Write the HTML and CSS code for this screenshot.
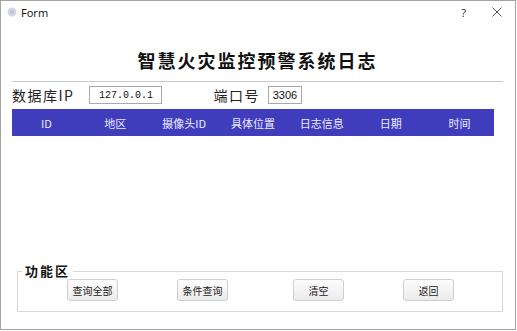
FILE: index.html
```html
<!DOCTYPE html>
<html lang="zh-CN">
<head>
    <meta charset="UTF-8">
    <title>Form</title>
    <link rel="stylesheet" href="styles.css">
</head>
<body>

<div class="window">
    <div class="titlebar">
        <svg class="app-icon" width="10" height="10" viewBox="0 0 10 10">
            <circle cx="5" cy="5" r="4.5" fill="#c9d9ec"/>
            <circle cx="5" cy="5" r="2.2" fill="#e3b7c4"/>
        </svg>
        <span class="caption">Form</span>
        <span class="help">?</span>
        <svg class="close" width="10" height="10" viewBox="0 0 10 10">
            <path d="M0.5 0.5 L9.5 9.5 M9.5 0.5 L0.5 9.5" stroke="#555" stroke-width="1"/>
        </svg>
    </div>

    <div class="content">
        <h1 class="title">智慧火灾监控预警系统日志</h1>
        <div class="rule"></div>

        <div class="conn-row">
            <label class="field-label" for="ip">数据库IP</label>
            <input class="ip-input" id="ip" type="text" value="127.0.0.1">
            <label class="field-label port-label" for="port">端口号</label>
            <input class="port-input" id="port" type="text" value="3306">
        </div>

        <div class="log-table">
            <div class="log-head">
                <span>ID</span>
                <span>地区</span>
                <span>摄像头ID</span>
                <span>具体位置</span>
                <span>日志信息</span>
                <span>日期</span>
                <span>时间</span>
            </div>
            <div class="log-body"></div>
        </div>

        <fieldset class="actions">
            <legend>功能区</legend>
            <div class="btn-row">
                <button>查询全部</button>
                <button>条件查询</button>
                <button class="btn-wide">清空</button>
                <button>返回</button>
            </div>
        </fieldset>
    </div>
</div>

</body>
</html>
```

FILE: styles.css
```css
body {
    margin: 0;
    padding: 0;
    background: #ffffff;
    font-family: "Noto Sans CJK SC", "Noto Sans", sans-serif;
}

.window {
    width: 516px;
    height: 330px;
    box-sizing: border-box;
    border: 1px solid #a3a3a3;
    background: #ffffff;
    display: flex;
    flex-direction: column;
}

.titlebar {
    height: 22px;
    display: flex;
    align-items: center;
    padding-left: 6px;
    font-family: "Noto Sans", sans-serif;
    font-size: 11px;
    color: #1a1a1a;
}

.app-icon {
    margin-right: 4px;
}

.caption {
    flex: 1;
}

.help {
    font-size: 11px;
    color: #333;
    margin-right: 26px;
}

.close {
    margin-right: 13px;
}

.content {
    flex: 1;
    display: flex;
    flex-direction: column;
    padding: 0 12px 0 11px;
}

.title {
    margin: 24px 0 0 0;
    text-align: center;
    font-size: 18px;
    line-height: 26px;
    font-weight: bold;
    letter-spacing: 2px;
    color: #111;
}

.rule {
    margin-top: 8px;
    height: 1px;
    background: #c8c8c8;
}

.conn-row {
    margin-top: 4px;
    height: 18px;
    display: flex;
    align-items: center;
}

.field-label {
    font-size: 14px;
    letter-spacing: 1.5px;
    color: #222;
    line-height: 18px;
}

.ip-input,
.port-input {
    height: 18px;
    box-sizing: border-box;
    border: 1px solid #a8a8a8;
    padding: 0;
    text-align: center;
    color: #111;
    background: #fff;
}

.ip-input {
    width: 73px;
    margin-left: 15px;
    font-family: "Liberation Mono", monospace;
    font-size: 10px;
}

.port-label {
    margin-left: 51px;
}

.port-input {
    width: 34px;
    margin-left: 8px;
    font-family: "Liberation Sans", sans-serif;
    font-size: 11px;
}

.log-table {
    margin-top: 5px;
    margin-right: 9px;
    height: 154px;
    display: flex;
    flex-direction: column;
}

.log-head {
    height: 27px;
    background: #403dbc;
    display: grid;
    grid-template-columns: repeat(7, 1fr);
    align-items: center;
    text-align: center;
    color: #ecebff;
    font-size: 11px;
}

.log-body {
    flex: 1;
    background: #ffffff;
}

.actions {
    margin: 0 0 0 5px;
    padding: 0 0 10px 0;
    border: 1px solid #d8d8d8;
    min-inline-size: 0;
}

.actions legend {
    margin-left: 4px;
    padding: 0 3px;
    font-size: 13px;
    line-height: 16px;
    font-weight: bold;
    letter-spacing: 2px;
    color: #111;
}

.btn-row {
    display: flex;
    gap: 59px;
    padding-left: 49px;
}

.btn-row button {
    width: 51px;
    height: 22px;
    padding: 0;
    border: 1px solid #cfcfcf;
    border-radius: 3px;
    background: linear-gradient(#fdfdfd, #ebebeb);
    font-family: "Noto Sans CJK SC", sans-serif;
    font-size: 10px;
    color: #222;
}

.btn-row .btn-wide {
    margin-left: 6px;
}
```
